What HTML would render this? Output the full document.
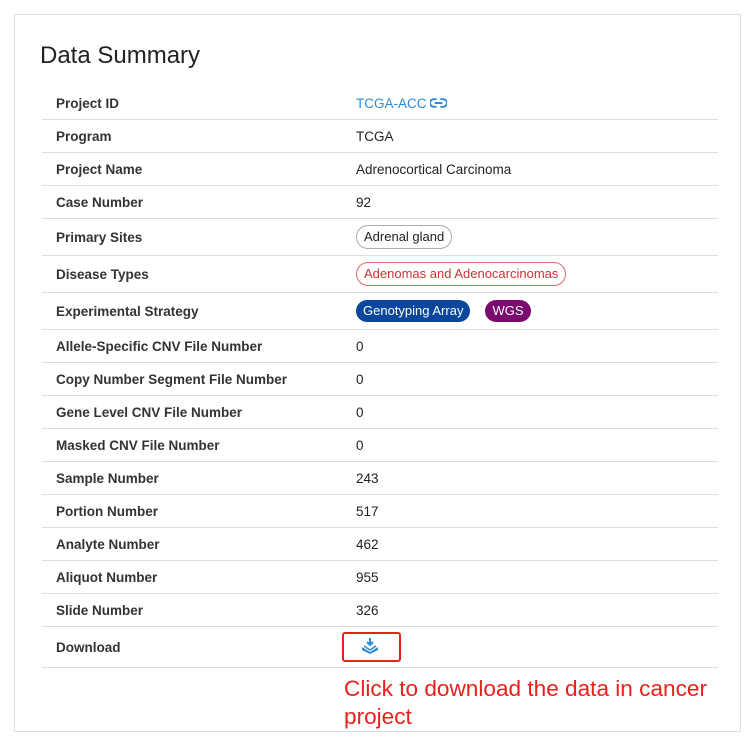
<!DOCTYPE html>
<html><head><style>
body{margin:0;background:#fff;font-family:"Liberation Sans",sans-serif;}
.frame{position:absolute;left:14px;top:14px;width:727px;height:718px;border:1px solid #ddd;box-sizing:border-box;}
h2{position:absolute;left:40px;top:42px;margin:0;font-weight:400;font-size:24px;color:#222;}
table{position:absolute;left:42px;top:87px;width:676px;border-collapse:collapse;font-size:13.5px;color:#222;}
td{border-bottom:1px solid #ddd;height:32px;padding:0;}
td:first-child{padding-left:14px;width:300px;font-weight:bold;color:#333;}
tr.b td{height:36px}
.pill{display:inline-block;border-radius:12px;padding:3px 7px;font-size:13px;line-height:16px;}
.red{position:absolute;left:344px;top:675px;color:#e8211b;font-size:22.6px;line-height:28px;}
.box{position:absolute;left:342px;top:632px;width:59px;height:30px;border:2px solid #e8211b;border-radius:3px;box-sizing:border-box;}
</style></head><body>
<div class="frame"></div>
<h2>Data Summary</h2>
<table>
<tr><td>Project ID</td><td style="color:#2a8bd6">TCGA-ACC<svg width="17" height="10" viewBox="0 0 18 10" style="vertical-align:0;margin-left:3px"><path d="M7 1H4a4 4 0 0 0 0 8h3M11 1h3a4 4 0 0 1 0 8h-3M5 5h8" stroke="#2a8bd6" stroke-width="2" fill="none"/></svg></td></tr>
<tr><td>Program</td><td>TCGA</td></tr>
<tr><td>Project Name</td><td>Adrenocortical Carcinoma</td></tr>
<tr><td>Case Number</td><td>92</td></tr>
<tr class="b"><td>Primary Sites</td><td><span class="pill" style="border:1px solid #aaa">Adrenal gland</span></td></tr>
<tr class="b"><td>Disease Types</td><td><span class="pill" style="border:1px solid #d66;color:#c33">Adenomas and Adenocarcinomas</span></td></tr>
<tr class="b"><td>Experimental Strategy</td><td><span class="pill" style="background:#0a469c;color:#fff">Genotyping Array</span>&nbsp;&nbsp;&nbsp; <span class="pill" style="background:#7a0a6e;color:#fff">WGS</span></td></tr>
<tr><td>Allele-Specific CNV File Number</td><td>0</td></tr>
<tr><td>Copy Number Segment File Number</td><td>0</td></tr>
<tr><td>Gene Level CNV File Number</td><td>0</td></tr>
<tr><td>Masked CNV File Number</td><td>0</td></tr>
<tr><td>Sample Number</td><td>243</td></tr>
<tr><td>Portion Number</td><td>517</td></tr>
<tr><td>Analyte Number</td><td>462</td></tr>
<tr><td>Aliquot Number</td><td>955</td></tr>
<tr><td>Slide Number</td><td>326</td></tr>
<tr><td style="height:40px">Download</td><td style="padding-left:4px"><svg width="20" height="18" viewBox="0 0 20 18"><path d="M10 1v7M7 5l3 3 3-3" stroke="#2a8bd6" stroke-width="2" fill="none"/><path d="M2 10l8 5 8-5v3l-8 4-8-4z" fill="#2a8bd6"/><path d="M4 9l6 4 6-4" stroke="#2a8bd6" stroke-width="1.5" fill="none"/></svg></td></tr>
</table>
<div class="box"></div>
<div class="red">Click to download the data in cancer<br>project</div>
</body></html>
